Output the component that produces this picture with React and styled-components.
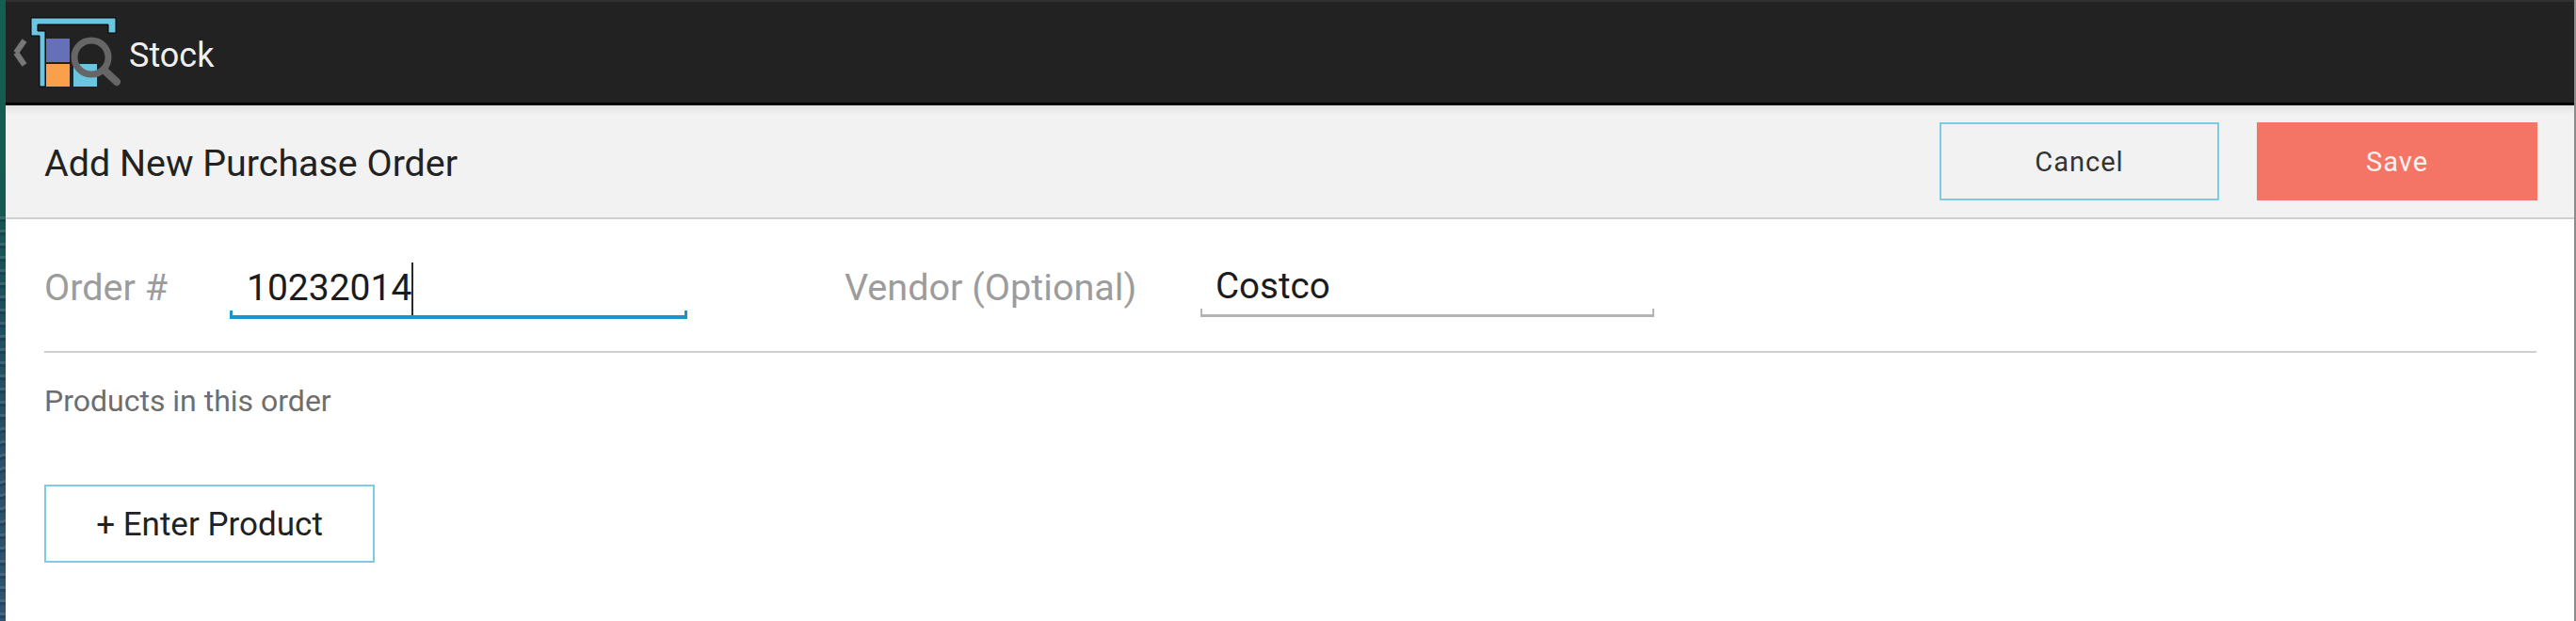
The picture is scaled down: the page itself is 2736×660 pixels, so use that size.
import React from 'react';
import styled, { createGlobalStyle } from 'styled-components';

const GlobalStyle = createGlobalStyle`
  html, body {
    margin: 0;
    padding: 0;
    background: #ffffff;
  }
  body {
    font-family: Roboto, "Liberation Sans", sans-serif;
  }
`;

const Screen = styled.div`
  display: flex;
  width: 2736px;
  height: 660px;
  overflow: hidden;
`;

const Wallpaper = styled.div`
  width: 6px;
  flex: none;
  background:
    repeating-linear-gradient(176deg, rgba(255, 255, 255, 0) 0 5px, rgba(150, 175, 180, 0.22) 5px 8px, rgba(10, 30, 70, 0.3) 8px 11px, rgba(255, 255, 255, 0) 11px 14px) 0 225px / 100% 100% no-repeat,
    linear-gradient(180deg, #12604f 0%, #145a50 30%, #1e4f5c 50%, #2b5068 75%, #2f5472 100%);
`;

const EdgeLine = styled.div`
  width: 2px;
  flex: none;
  background: #8c8c8c;
`;

const Main = styled.div`
  flex: 1;
  display: flex;
  flex-direction: column;
  min-width: 0;
`;

const ActionBar = styled.header`
  height: 112px;
  box-sizing: border-box;
  display: flex;
  align-items: center;
  background: #222222;
  border-top: 2px solid #303030;
  border-bottom: 3px solid #000000;
  padding-left: 2px;
`;

const AppTitle = styled.span`
  margin: 6px 0 0 1px;
  font-size: 36px;
  color: #f0f0f0;
`;

const PageHeader = styled.div`
  height: 121px;
  box-sizing: border-box;
  display: flex;
  align-items: center;
  justify-content: space-between;
  padding: 0 39px 0 41px;
  background: linear-gradient(180deg, #e2e2e2 0, #f2f2f2 10px);
  border-bottom: 2px solid #cfcfcf;
`;

const PageTitle = styled.h1`
  margin: 3px 0 0;
  font-size: 39.4px;
  font-weight: 400;
  color: #222222;
`;

const HeaderActions = styled.div`
  display: flex;
  gap: 40px;
`;

const ActionButton = styled.button`
  width: ${p => p.$width}px;
  height: 83px;
  box-sizing: border-box;
  padding: 0;
  font-family: inherit;
  font-size: 29px;
  letter-spacing: 1px;
  border: 2px solid ${p => (p.$primary ? '#f47565' : '#7fcbe3')};
  background: ${p => (p.$primary ? '#f47565' : 'transparent')};
  color: ${p => (p.$primary ? '#fdf0ee' : '#333333')};
`;

const Content = styled.div`
  flex: 1;
  padding: 0 40px 0 41px;
`;

const FormRow = styled.div`
  display: flex;
  align-items: flex-start;
  height: 142px;
  box-sizing: border-box;
  border-bottom: 2px solid #d0d0d0;
`;

const FieldLabel = styled.label`
  width: ${p => p.$width}px;
  flex: none;
  margin-top: 50px;
  font-size: 39.6px;
  line-height: 46px;
  color: #9c9c9c;
`;

const FieldSlot = styled.div`
  position: relative;
  flex: none;
  width: ${p => p.$width}px;
  height: ${p => p.$height}px;
  margin-right: ${p => p.$gap}px;
  margin-top: 43px;
`;

// the little upturned ends of the Holo text field underline
const FieldEdge = styled.div`
  position: absolute;
  left: 0;
  right: 0;
  bottom: 0;
  height: 9px;
  box-sizing: border-box;
  border: solid ${p => (p.$active ? '#1a94cb' : '#b4b4b4')};
  border-width: 0 ${p => (p.$active ? 3 : 2)}px ${p => (p.$active ? 4 : 3)}px;
`;

const FieldText = styled.div`
  padding: ${p => p.$top || 0}px 0 0 ${p => p.$inset}px;
  font-size: ${p => p.$size}px;
  line-height: 50px;
  color: #1c1c1c;
  display: flex;
  align-items: center;
`;

const Caret = styled.span`
  width: 2px;
  height: 56px;
  background: #2a2a2a;
  margin-top: 3px;
`;

const SectionLabel = styled.div`
  margin-top: 32px;
  font-size: 32px;
  line-height: 38px;
  color: #6e6e6e;
`;

const EnterButton = styled.button`
  display: block;
  margin-top: 70px;
  width: 351px;
  height: 83px;
  box-sizing: border-box;
  padding: 2px 0 0;
  font-family: inherit;
  font-size: 35px;
  color: #222222;
  background: #ffffff;
  border: 2px solid #7fcbe3;
`;

function StockLogo() {
  return (
    <svg width="128" height="84" viewBox="8 14 128 84" style={{ flex: 'none' }}>
      <path d="M17 56 L26 43 M17 56 L26 69" stroke="#777777" strokeWidth="6" fill="none" />
      <path
        d="M33 19 H123 V35 H115 V26 H40 V33 H48 V92 H42 V38 H33 Z"
        fill="#6cc5e0"
        stroke="#000"
        strokeWidth="1"
      />
      <rect x="49" y="41" width="25" height="25" fill="#6670b8" />
      <rect x="49" y="68" width="25" height="24" fill="#f9a04c" />
      <rect x="78" y="68" width="25" height="24" fill="#6cc5e0" />
      <circle cx="97" cy="61" r="18" stroke="#666666" strokeWidth="7" fill="none" />
      <path d="M110 74 L124 87" stroke="#666666" strokeWidth="8" strokeLinecap="round" />
    </svg>
  );
}

export default function App() {
  return (
    <Screen>
      <GlobalStyle />
      <Wallpaper />
      <Main>
        <ActionBar>
          <StockLogo />
          <AppTitle>Stock</AppTitle>
        </ActionBar>
        <PageHeader>
          <PageTitle>Add New Purchase Order</PageTitle>
          <HeaderActions>
            <ActionButton $width={297}>Cancel</ActionButton>
            <ActionButton $width={298} $primary>Save</ActionButton>
          </HeaderActions>
        </PageHeader>
        <Content>
          <FormRow>
            <FieldLabel $width={197}>Order #</FieldLabel>
            <FieldSlot $width={486} $height={63} $gap={167}>
              <FieldEdge $active />
              <FieldText $inset={18} $size={39}>
                10232014
                <Caret />
              </FieldText>
            </FieldSlot>
            <FieldLabel $width={378}>Vendor (Optional)</FieldLabel>
            <FieldSlot $width={482} $height={61} $gap={0}>
              <FieldEdge />
              <FieldText $inset={16} $size={38.5} $top={3}>Costco</FieldText>
            </FieldSlot>
          </FormRow>
          <SectionLabel>Products in this order</SectionLabel>
          <EnterButton>+ Enter Product</EnterButton>
        </Content>
      </Main>
      <EdgeLine />
    </Screen>
  );
}
